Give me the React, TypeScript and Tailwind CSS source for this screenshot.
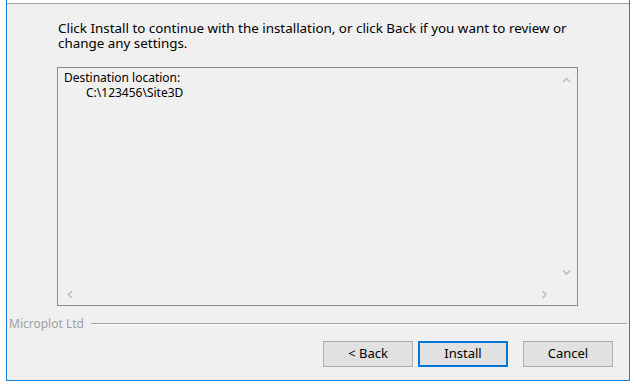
import React from "react";

const FONT = { fontFamily: '"Noto Sans", "Open Sans", Arial, sans-serif' };

function Chevron({ dir }: { dir: "up" | "down" | "left" | "right" }) {
  const pts = {
    up: "1,5 4.5,1.5 8,5",
    down: "1,1.5 4.5,5 8,1.5",
    left: "5,1 1.5,4.5 5,8",
    right: "1.5,1 5,4.5 1.5,8",
  }[dir];
  const vertical = dir === "up" || dir === "down";
  return (
    <svg width={vertical ? 9 : 7} height={vertical ? 7 : 9} viewBox={vertical ? "0 0 9 7" : "0 0 7 9"}>
      <polyline points={pts} fill="none" stroke="#bfbfbf" strokeWidth="1.6" />
    </svg>
  );
}

function Button({ label, focused }: { label: string; focused?: boolean }) {
  return (
    <div
      className={`w-[90px] h-[26px] flex items-center justify-center text-[13px] text-black bg-[#e1e1e1] ${
        focused ? "border-2 border-[#0078d7]" : "border border-[#adadad]"
      }`}
    >
      {label}
    </div>
  );
}

export default function App() {
  return (
    <div className="w-[635px] h-[391px] bg-white overflow-hidden" style={FONT}>
      <div className="ml-[6px] w-[624px] h-[381px] border-l border-r border-b border-[#1c7fd6] flex flex-col">
        {/* header strip */}
        <div className="h-[3px] bg-white" />
        <div className="h-px bg-[#a0a0a0]" />

        <div className="flex-1 bg-[#f0f0f0] flex flex-col">
          {/* intro */}
          <p className="pl-[51px] pt-[17px] text-[13.4px] leading-[15px] text-black whitespace-nowrap">
            Click Install to continue with the installation, or click Back if you want to review or
            <br />
            change any settings.
          </p>

          {/* list box */}
          <div className="ml-[50px] mt-[16px] w-[521px] h-[239px] border border-[#8c8c8c] flex flex-col">
            <div className="flex-1 flex">
              <div className="flex-1 pl-[6px] pt-[2px] text-[12px] leading-[15px] text-black">
                <div>Destination location:</div>
                <div className="pl-[22px]">C:\123456\Site3D</div>
              </div>
              <div className="w-[21px] flex flex-col items-center justify-between pt-[9px] pb-[8px]">
                <Chevron dir="up" />
                <Chevron dir="down" />
              </div>
            </div>
            <div className="h-[21px] flex">
              <div className="flex-1 flex items-center justify-between pl-[9px] pr-[8px]">
                <Chevron dir="left" />
                <Chevron dir="right" />
              </div>
              <div className="w-[21px]" />
            </div>
          </div>

          {/* branding */}
          <div className="mt-[11px] flex items-center">
            <span className="pl-[2px] text-[12px] leading-[14px] text-[#a0a0a0]">Microplot Ltd</span>
            <div className="flex-1 ml-[7px] mr-[2px] flex flex-col">
              <div className="h-px bg-[#a0a0a0]" />
              <div className="h-px bg-white" />
            </div>
          </div>

          {/* buttons */}
          <div className="mt-[10px] flex justify-end pr-[16px]">
            <Button label="< Back" />
            <div className="w-[5px]" />
            <Button label="Install" focused />
            <div className="w-[15px]" />
            <Button label="Cancel" />
          </div>
        </div>
      </div>
    </div>
  );
}
